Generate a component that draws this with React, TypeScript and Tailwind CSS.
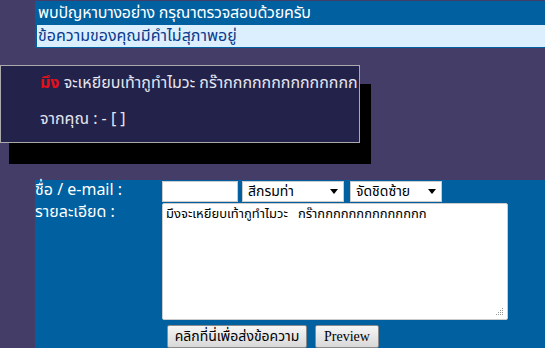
import React from "react";

const thai = { fontFamily: 'Tahoma, "Noto Sans Thai", "Noto Sans", "DejaVu Sans", sans-serif' };

export default function App() {
  return (
    <div className="w-[545px] h-[348px] overflow-hidden bg-[#433d68] relative" style={thai}>
      <div className="ml-[35px] mt-[1px] bg-[#0060a0] pl-[2px] pb-[1px]">
        <div className="h-[24px] leading-[24px] text-[16px] text-white pl-[1px] tracking-[-0.2px]">พบปัญหาบางอย่าง กรุณาตรวจสอบด้วยครับ</div>
        <div className="h-[22px] leading-[22px] text-[16px] text-[#0a3c8c] bg-[#dcefff] pl-[1px]">ข้อความของคุณมีคำไม่สุภาพอยู่</div>
      </div>
      <div className="mt-[17px] w-[360px] h-[78px] border border-[#aaaaaa] bg-[#23224a] shadow-[10px_20px_0_1px_#000] pl-[39px] pt-[5px] text-[16px] text-[#e6e6f0] whitespace-nowrap">
        <div className="h-[24px] leading-[24px]"><span className="text-[#e3101c] font-bold">มึง</span> จะเหยียบเท้ากูทำไมวะ กร๊ากกกกกกกกกกกกกก</div>
        <div className="h-[38px] leading-[38px] mt-[5px]">จากคุณ : - [ ]</div>
      </div>
      <div className="mt-[37px] ml-[35px] h-[168px] bg-[#0060a0] flex">
        <div className="w-[127px] text-white text-[16px]">
          <div className="h-[23px] leading-[21px]">ชื่อ / e-mail :</div>
          <div className="h-[23px] leading-[19px]">รายละเอียด :</div>
        </div>
        <div className="flex flex-col">
          <div className="flex items-center gap-[4px] h-[23px]">
            <input className="w-[76px] h-[21px] bg-white border border-[#ccc] outline-none" />
            <div className="w-[102px] h-[21px] bg-white border border-[#ccc] flex items-center justify-between px-[5px] text-[14px] text-black">
              <span>สีกรมท่า</span>
              <svg width="8" height="5" viewBox="0 0 8 5"><path d="M0 0h8L4 5z" fill="#000" /></svg>
            </div>
            <div className="ml-[2px] w-[92px] h-[21px] bg-white border border-[#ccc] flex items-center justify-between px-[5px] text-[14px] text-black">
              <span>จัดชิดซ้าย</span>
              <svg width="8" height="5" viewBox="0 0 8 5"><path d="M0 0h8L4 5z" fill="#000" /></svg>
            </div>
          </div>
          <div className="relative w-[346px] h-[119px] bg-white border border-[#ccc] rounded-[2px] px-[3px] pt-[1px] text-[13px] text-black whitespace-nowrap">
            มึงจะเหยียบเท้ากูทำไมวะ&nbsp;&nbsp; กร๊ากกกกกกกกกกกกกก
            <svg className="absolute right-[3px] bottom-[3px]" width="8" height="8" viewBox="0 0 8 8">
              <g fill="#999">
                <rect x="6" y="0" width="1" height="1" />
                <rect x="4" y="2" width="1" height="1" />
                <rect x="6" y="2" width="1" height="1" />
                <rect x="2" y="4" width="1" height="1" />
                <rect x="4" y="4" width="1" height="1" />
                <rect x="6" y="4" width="1" height="1" />
                <rect x="0" y="6" width="1" height="1" />
                <rect x="2" y="6" width="1" height="1" />
                <rect x="4" y="6" width="1" height="1" />
                <rect x="6" y="6" width="1" height="1" />
              </g>
            </svg>
          </div>
          <div className="flex gap-[8px] mt-[5px] ml-[5px]">
            <button className="w-[140px] h-[23px] rounded-[2px] border border-[#8a8a8a] bg-gradient-to-b from-[#f6f6f6] to-[#d8d8d8] text-[14px] text-black">คลิกที่นี่เพื่อส่งข้อความ</button>
            <button className="w-[64px] h-[23px] rounded-[2px] border border-[#8a8a8a] bg-gradient-to-b from-[#f6f6f6] to-[#d8d8d8] text-[14px] text-black" style={{ fontFamily: '"Liberation Serif", serif' }}>Preview</button>
          </div>
        </div>
      </div>
    </div>
  );
}
